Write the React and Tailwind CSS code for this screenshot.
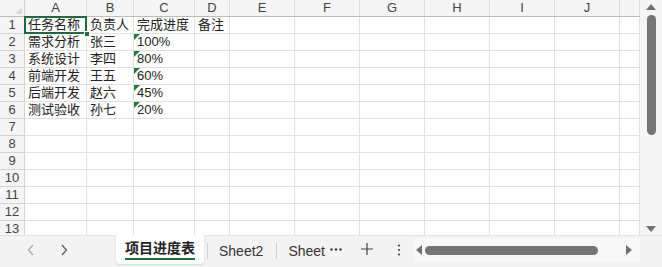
import React from 'react';

const cols = [
  { k: 'A', w: 'w-[62px]' },
  { k: 'B', w: 'w-[47px]' },
  { k: 'C', w: 'w-[61px]' },
  { k: 'D', w: 'w-[35px]' },
  { k: 'E', w: 'w-[65px]' },
  { k: 'F', w: 'w-[65px]' },
  { k: 'G', w: 'w-[65px]' },
  { k: 'H', w: 'w-[65px]' },
  { k: 'I', w: 'w-[65px]' },
  { k: 'J', w: 'w-[65px]' },
  { k: '', w: 'w-[20px]' },
];

const data = [
  ['任务名称', '负责人', '完成进度', '备注'],
  ['需求分析', '张三', '100%'],
  ['系统设计', '李四', '80%'],
  ['前端开发', '王五', '60%'],
  ['后端开发', '赵六', '45%'],
  ['测试验收', '孙七', '20%'],
];

const font = "font-['Liberation_Sans','Noto_Sans_CJK_SC',sans-serif]";

const App = () => {
  return (
    <div className={`w-[662px] h-[267px] bg-white overflow-hidden text-[#222] ${font}`}>
      <div className="flex h-[235px]">
        {/* Grid */}
        <div className="w-[640px] overflow-hidden">
          {/* Column headers */}
          <div className="flex h-[17px] bg-[#f5f5f5] border-b border-[#bdbdbd]">
            <div className="w-[25px] shrink-0 border-r border-[#d4d4d4] relative">
              <div className="absolute right-[2px] bottom-[2px] w-0 h-0 border-l-[7px] border-l-transparent border-b-[7px] border-b-[#dcdcdc]" />
            </div>
            {cols.map((c, i) => (
              <div
                key={i}
                className={`${c.w} shrink-0 border-r border-[#dcdcdc] text-center text-[13px] leading-[16px] text-[#444]`}
              >
                {c.k}
              </div>
            ))}
          </div>
          {/* Rows */}
          {Array.from({ length: 13 }).map((_, r) => (
            <div key={r} className="flex h-[17px]">
              <div className="w-[25px] shrink-0 bg-[#f5f5f5] border-r border-b border-[#d4d4d4] text-center text-[13px] leading-[16px] text-[#444]">
                {r + 1}
              </div>
              {cols.map((c, i) => {
                const v = data[r] ? data[r][i] : undefined;
                const selected = r === 0 && i === 0;
                const note = r > 0 && r < 6 && i === 2;
                return (
                  <div
                    key={i}
                    className={`${c.w} shrink-0 relative border-r border-b border-[#e1e1e1] text-[13px] leading-[16px] whitespace-nowrap pl-[3px]`}
                  >
                    {note && (
                      <div className="absolute left-0 top-0 w-0 h-0 border-t-[6px] border-t-[#1f7a3d] border-r-[6px] border-r-transparent" />
                    )}
                    {selected && (
                      <>
                        <div className="absolute -left-[1px] -top-[1px] -right-[1px] -bottom-[1px] border-2 border-[#1e6b41] z-10" />
                        <div className="absolute -right-[4px] -bottom-[4px] w-[6px] h-[6px] bg-[#1e6b41] border border-white z-20" />
                      </>
                    )}
                    {v}
                  </div>
                );
              })}
            </div>
          ))}
        </div>
        {/* Vertical scrollbar */}
        <div className="w-[22px] bg-[#f5f5f5] flex flex-col items-center pt-[4px] pb-[3px]">
          <div className="w-0 h-0 border-l-[5px] border-l-transparent border-r-[5px] border-r-transparent border-b-[6px] border-b-[#707070]" />
          <div className="mt-[5px] w-[9px] h-[120px] rounded-full bg-[#757575]" />
          <div className="flex-1" />
          <div className="w-0 h-0 border-l-[5px] border-l-transparent border-r-[5px] border-r-transparent border-t-[6px] border-t-[#707070]" />
        </div>
      </div>

      {/* Sheet tabs bar */}
      <div className="h-[32px] bg-[#f3f3f3] border-t border-[#e3e3e3] flex items-start">
        <div className="w-[116px] h-[28px] flex items-center">
          <span className="ml-[27px]">
            <svg width="8" height="12" viewBox="0 0 8 12"><path d="M6 1 L1.5 6 L6 11" fill="none" stroke="#a8a8a8" strokeWidth="1.2" /></svg>
          </span>
          <span className="ml-[25px]">
            <svg width="8" height="12" viewBox="0 0 8 12"><path d="M2 1 L6.5 6 L2 11" fill="none" stroke="#555" strokeWidth="1.2" /></svg>
          </span>
        </div>
        <div className="w-[88px] h-[29px] bg-white rounded-b-[4px] shadow-[0_1px_2px_rgba(0,0,0,0.12)] flex flex-col items-center pt-[3px] -mt-[1px]">
          <span className="text-[14px] leading-[18px] font-bold text-[#222] font-['Noto_Sans_CJK_SC',sans-serif]">项目进度表</span>
          <div className="mt-[2px] w-[70px] h-[2px] bg-[#1e6b41]" />
        </div>
        <div className="w-px h-[16px] bg-[#cfcfcf] ml-[3px] mt-[7px]" />
        <span className="ml-[11px] mt-[6px] text-[14px] leading-[18px] text-[#333]">Sheet2</span>
        <div className="w-px h-[16px] bg-[#cfcfcf] ml-[13px] mt-[7px]" />
        <span className="ml-[11px] mt-[6px] text-[14px] leading-[18px] text-[#333]">Sheet</span>
        <span className="ml-[5px] mt-[12px]">
          <svg width="12" height="3" viewBox="0 0 12 3"><circle cx="1.5" cy="1.5" r="1.3" fill="#444" /><circle cx="6" cy="1.5" r="1.3" fill="#444" /><circle cx="10.5" cy="1.5" r="1.3" fill="#444" /></svg>
        </span>
        <span className="ml-[19px] mt-[7px]">
          <svg width="12" height="12" viewBox="0 0 12 12"><path d="M6 0 V12 M0 6 H12" stroke="#444" strokeWidth="1.2" /></svg>
        </span>
        <span className="ml-[24px] mt-[8px]">
          <svg width="4" height="12" viewBox="0 0 4 12"><circle cx="2" cy="1.5" r="1.1" fill="#444" /><circle cx="2" cy="6" r="1.1" fill="#444" /><circle cx="2" cy="10.5" r="1.1" fill="#444" /></svg>
        </span>
        <div className="ml-[12px] mt-[2px] w-[227px] h-[24px] bg-[#f8f8f8] flex items-center px-[2px]">
          <div className="ml-[1px] w-0 h-0 border-t-[5px] border-t-transparent border-b-[5px] border-b-transparent border-r-[6px] border-r-[#707070]" />
          <div className="ml-[3px] w-[173px] h-[9px] rounded-full bg-[#757575]" />
          <div className="flex-1" />
          <div className="mr-[6px] w-0 h-0 border-t-[5px] border-t-transparent border-b-[5px] border-b-transparent border-l-[6px] border-l-[#707070]" />
        </div>
      </div>
    </div>
  );
};

export default App;
